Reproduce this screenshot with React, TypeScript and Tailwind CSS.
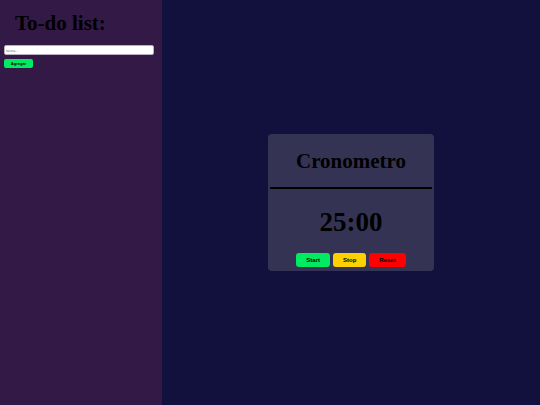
import { useEffect, useState } from "react";
import type { FormEvent } from "react";

const INITIAL_SECONDS = 25 * 60;

function formatTime(seconds: number) {
  const minutes = Math.floor(seconds / 60);
  return `${String(minutes).padStart(2, "0")}:${String(seconds % 60).padStart(2, "0")}`;
}

function TodoList() {
  const [task, setTask] = useState("");
  const [tasks, setTasks] = useState<string[]>([]);

  const addTask = (event: FormEvent) => {
    event.preventDefault();
    if (!task.trim()) return;
    setTasks([...tasks, task.trim()]);
    setTask("");
  };

  return (
    <aside className="w-[30%] bg-[#331945] px-1 pt-2">
      <h1 className="ml-[11px] text-[21px] leading-[30px] font-bold">To-do list:</h1>
      <form onSubmit={addTask} className="mt-[7px] mr-1 flex flex-col items-start gap-1">
        <input
          type="text"
          aria-label="Tarea"
          placeholder="tarea..."
          value={task}
          onChange={(e) => setTask(e.target.value)}
          className="h-[10px] w-full rounded-[2px] border border-[#b9aec2] bg-white px-px font-['Liberation_Sans',sans-serif] text-[4px] leading-[8px] placeholder:text-[#757575]"
        />
        <button
          type="submit"
          className="h-[9px] w-[29px] rounded-[2px] bg-[#00ea62] font-['Liberation_Sans',sans-serif] text-[4px] leading-[9px] font-bold"
        >
          Agregar
        </button>
      </form>
      <ul className="mt-2 text-xs">
        {tasks.map((item, index) => (
          <li key={index}>{item}</li>
        ))}
      </ul>
    </aside>
  );
}

function Timer() {
  const [seconds, setSeconds] = useState(INITIAL_SECONDS);
  const [running, setRunning] = useState(false);

  useEffect(() => {
    if (!running) return;
    const id = setInterval(() => setSeconds((s) => Math.max(s - 1, 0)), 1000);
    return () => clearInterval(id);
  }, [running]);

  const reset = () => {
    setRunning(false);
    setSeconds(INITIAL_SECONDS);
  };

  return (
    <section className="w-[44%] rounded-[4px] bg-[#353353] px-[2px] pb-1 text-center">
      <h2 className="pt-3 pb-[11px] text-[21px] leading-[30px] font-bold">Cronometro</h2>
      <hr className="border-t-2 border-black" />
      <p className="pt-4 pb-[14px] text-[27px] leading-[34px] font-bold">{formatTime(seconds)}</p>
      <div className="flex justify-center gap-[3px] font-['Liberation_Sans',sans-serif] text-[6px] leading-[14px] font-bold">
        <button type="button" onClick={() => setRunning(true)} className="rounded-[3px] bg-[#00ea62] px-[10px]">
          Start
        </button>
        <button type="button" onClick={() => setRunning(false)} className="rounded-[3px] bg-[#ffd000] px-[10px]">
          Stop
        </button>
        <button type="button" onClick={reset} className="rounded-[3px] bg-[#ff0000] px-[10px]">
          Reset
        </button>
      </div>
    </section>
  );
}

export default function App() {
  return (
    <div className="flex min-h-screen bg-[#12103d] font-['Liberation_Serif',serif] text-black">
      <TodoList />
      <main className="flex flex-1 items-center justify-center">
        <Timer />
      </main>
    </div>
  );
}
